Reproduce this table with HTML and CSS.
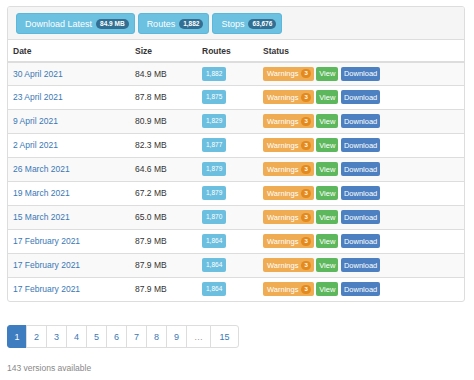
FILE: index.html
```html
<!DOCTYPE html>
<html>
<head>
<meta charset="utf-8">
<link rel="stylesheet" href="styles.css">
</head>
<body>
<div class="panel">
  <div class="panel-heading">
    <span class="btn-info">Download Latest <span class="badge-dark">84.9 MB</span></span>
    <span class="btn-info">Routes <span class="badge-dark">1,882</span></span>
    <span class="btn-info">Stops <span class="badge-dark">63,676</span></span>
  </div>
  <table class="table">
    <thead>
      <tr><th class="c-date">Date</th><th class="c-size">Size</th><th class="c-routes">Routes</th><th>Status</th></tr>
    </thead>
    <tbody>
      <tr><td><a>30 April 2021</a></td><td>84.9 MB</td><td><span class="label">1,882</span></td><td><div class="actions"><span class="b warn">Warnings <span class="wbadge">3</span></span><span class="b view">View</span><span class="b dl">Download</span></div></td></tr>
      <tr><td><a>23 April 2021</a></td><td>87.8 MB</td><td><span class="label">1,875</span></td><td><div class="actions"><span class="b warn">Warnings <span class="wbadge">3</span></span><span class="b view">View</span><span class="b dl">Download</span></div></td></tr>
      <tr><td><a>9 April 2021</a></td><td>80.9 MB</td><td><span class="label">1,829</span></td><td><div class="actions"><span class="b warn">Warnings <span class="wbadge">3</span></span><span class="b view">View</span><span class="b dl">Download</span></div></td></tr>
      <tr><td><a>2 April 2021</a></td><td>82.3 MB</td><td><span class="label">1,877</span></td><td><div class="actions"><span class="b warn">Warnings <span class="wbadge">3</span></span><span class="b view">View</span><span class="b dl">Download</span></div></td></tr>
      <tr><td><a>26 March 2021</a></td><td>64.6 MB</td><td><span class="label">1,879</span></td><td><div class="actions"><span class="b warn">Warnings <span class="wbadge">3</span></span><span class="b view">View</span><span class="b dl">Download</span></div></td></tr>
      <tr><td><a>19 March 2021</a></td><td>67.2 MB</td><td><span class="label">1,879</span></td><td><div class="actions"><span class="b warn">Warnings <span class="wbadge">3</span></span><span class="b view">View</span><span class="b dl">Download</span></div></td></tr>
      <tr><td><a>15 March 2021</a></td><td>65.0 MB</td><td><span class="label">1,870</span></td><td><div class="actions"><span class="b warn">Warnings <span class="wbadge">3</span></span><span class="b view">View</span><span class="b dl">Download</span></div></td></tr>
      <tr><td><a>17 February 2021</a></td><td>87.9 MB</td><td><span class="label">1,864</span></td><td><div class="actions"><span class="b warn">Warnings <span class="wbadge">3</span></span><span class="b view">View</span><span class="b dl">Download</span></div></td></tr>
      <tr><td><a>17 February 2021</a></td><td>87.9 MB</td><td><span class="label">1,864</span></td><td><div class="actions"><span class="b warn">Warnings <span class="wbadge">3</span></span><span class="b view">View</span><span class="b dl">Download</span></div></td></tr>
      <tr><td><a>17 February 2021</a></td><td>87.9 MB</td><td><span class="label">1,864</span></td><td><div class="actions"><span class="b warn">Warnings <span class="wbadge">3</span></span><span class="b view">View</span><span class="b dl">Download</span></div></td></tr>
    </tbody>
  </table>
</div>
<ul class="pagination">
  <li class="active">1</li><li>2</li><li>3</li><li>4</li><li>5</li><li>6</li><li>7</li><li>8</li><li>9</li><li class="ell">…</li><li class="last">15</li>
</ul>
<p class="count">143 versions available</p>
</body>
</html>
```

FILE: styles.css
```css
* { box-sizing: border-box; }
body {
  margin: 0;
  padding: 6px 0 0 7px;
  font-family: "Liberation Sans", Arial, sans-serif;
  font-size: 8.5px;
  color: #333;
  background: #fff;
}
.panel {
  width: 458px;
  border: 1px solid #ddd;
  border-radius: 3px;
  overflow: hidden;
}
.panel-heading {
  background: #f5f5f5;
  border-bottom: 1px solid #ddd;
  padding: 6px 8px 5px;
  display: flex;
  gap: 3px;
}
.btn-info {
  display: inline-flex;
  align-items: center;
  height: 21px;
  padding: 0 5px 0 8px;
  background: #6cc0e0;
  border: 1px solid #5bb7db;
  border-radius: 3px;
  color: #fff;
  font-size: 9px;
}
.badge-dark {
  margin-left: 4px;
  background: #336f92;
  color: #fff;
  font-weight: bold;
  font-size: 6.5px;
  border-radius: 6px;
  padding: 1px 4px;
  line-height: 8px;
}
.table {
  width: 100%;
  border-collapse: collapse;
}
.table th {
  text-align: left;
  font-weight: bold;
  height: 22px;
  padding: 0 5px;
  border-bottom: 2px solid #ddd;
  vertical-align: middle;
}
.c-date { width: 122px; }
.c-size { width: 67px; }
.c-routes { width: 61px; }
.table td {
  height: 24px;
  padding: 0 5px;
  border-top: 1px solid #ddd;
  vertical-align: middle;
}
.table tbody tr:first-child td { border-top: 0; height: 23px; }
.table tbody tr:nth-child(odd) { background: #f9f9f9; }
.table a { color: #3a78b5; }
.label {
  display: inline-block;
  background: #6cbfdf;
  color: #fff;
  font-size: 6.5px;
  padding: 0 4px;
  height: 14px;
  line-height: 14px;
  border-radius: 2px;
}
.actions { display: flex; gap: 2.5px; }
.b {
  display: inline-flex;
  align-items: center;
  height: 14px;
  padding: 0 3px;
  border-radius: 2px;
  color: #fff;
  font-size: 7.5px;
}
.warn { background: #efac52; padding: 0 3px 0 4px; }
.wbadge {
  display: inline-block;
  margin-left: 3px;
  background: #e48a1c;
  color: #fff;
  font-weight: bold;
  font-size: 6px;
  border-radius: 5px;
  padding: 0 3px;
  line-height: 9px;
}
.view { background: #5db85d; }
.dl { background: #4c80c0; }
.pagination {
  list-style: none;
  margin: 23px 0 0;
  padding: 0;
  display: flex;
}
.pagination li {
  width: 21px;
  height: 23px;
  display: flex;
  align-items: center;
  justify-content: center;
  border: 1px solid #ddd;
  margin-left: -1px;
  color: #3a78b5;
  font-size: 9px;
  background: #fff;
}
.pagination li:first-child { margin-left: 0; border-radius: 3px 0 0 3px; width: 20px; }
.pagination li.active { background: #3f7dc1; border-color: #3f7dc1; color: #fff; }
.pagination li.ell { width: 25px; color: #999; }
.pagination li.last { width: 29px; border-radius: 0 3px 3px 0; }
.count {
  margin: 15px 0 0;
  color: #888;
  font-size: 8.5px;
}
```
